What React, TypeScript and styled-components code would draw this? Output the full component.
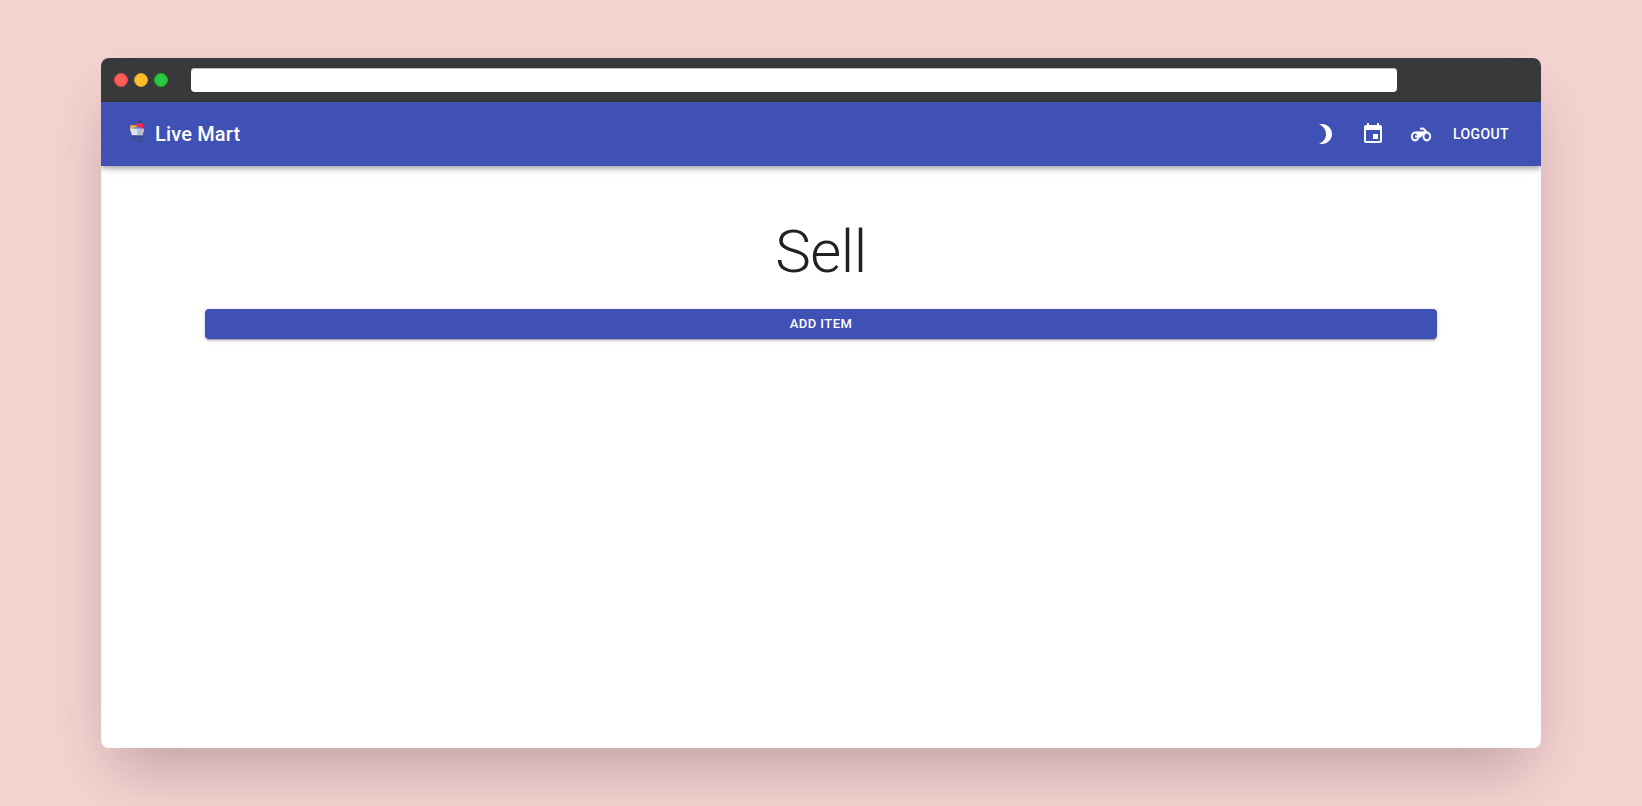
import React from "react";
import styled, { createGlobalStyle } from "styled-components";

const GlobalStyle = createGlobalStyle`
  * { box-sizing: border-box; }
  html, body { margin: 0; }
  body {
    background: #f5d3d1;
    font-family: Roboto, "Liberation Sans", sans-serif;
    color: rgba(0, 0, 0, 0.87);
  }
`;

const Page = styled.div`
  height: 806px;
  padding: 58px 101px;
  overflow: hidden;
`;

const Window = styled.div`
  height: 690px;
  overflow: hidden;
  border-radius: 8px;
  background: #fff;
  box-shadow: 0 30px 60px -12px rgba(0, 0, 0, 0.24);
`;

const TitleBar = styled.div`
  height: 44px;
  padding-left: 13px;
  display: flex;
  align-items: center;
  gap: 6px;
  background: #38393b;
`;

const Dot = styled.span<{ $fill: string; $edge: string }>`
  width: 14px;
  height: 14px;
  border-radius: 50%;
  background: ${(p) => p.$fill};
  border: 1px solid ${(p) => p.$edge};
`;

const Address = styled.div`
  width: 1206px;
  height: 24px;
  margin-left: 17px;
  border-radius: 4px;
  background: #fff;
  box-shadow: inset 0 1px 0 #b9b9ba;
`;

const AppBar = styled.header`
  height: 64px;
  padding: 0 24px;
  display: flex;
  align-items: center;
  justify-content: space-between;
  background: #3f51b5;
  color: #fff;
  box-shadow: 0 2px 4px -1px rgba(0, 0, 0, 0.2), 0 4px 5px 0 rgba(0, 0, 0, 0.14), 0 1px 10px 0 rgba(0, 0, 0, 0.12);
`;

const Brand = styled.div`
  display: flex;
  align-items: center;
  font-size: 20px;
  font-weight: 500;
  line-height: 32px;
  letter-spacing: 0.15px;
`;

const CartIcon = styled.svg`
  width: 24px;
  height: 24px;
  margin: 0 6px 6px 0;
`;

const Actions = styled.nav`
  display: flex;
  align-items: center;
`;

const IconButton = styled.button`
  width: 48px;
  height: 48px;
  padding: 12px;
  border: 0;
  background: none;
  color: inherit;
  svg { display: block; width: 24px; height: 24px; fill: currentColor; }
`;

const TextButton = styled.button`
  padding: 6px 8px;
  border: 0;
  background: none;
  color: inherit;
  font: 500 14px/24.5px Roboto, sans-serif;
  letter-spacing: 0.4px;
`;

const Main = styled.main`
  width: 1280px;
  margin: 0 auto;
  padding: 50px 24px 0;
`;

const Heading = styled.h1`
  margin: 0 0 21px;
  font-size: 60px;
  font-weight: 300;
  line-height: 72px;
  letter-spacing: -0.5px;
  text-align: center;
`;

const AddButton = styled.button`
  display: block;
  width: 100%;
  height: 30px;
  padding: 0;
  border: 0;
  border-radius: 4px;
  background: #3f51b5;
  color: #fff;
  font: 500 13px/22px Roboto, sans-serif;
  letter-spacing: 0.46px;
  box-shadow: 0 3px 1px -2px rgba(0, 0, 0, 0.2), 0 2px 2px 0 rgba(0, 0, 0, 0.14), 0 1px 5px 0 rgba(0, 0, 0, 0.12);
`;

const MOON = "M9 2c-1.05 0-2.05.16-3 .46 4.06 1.27 7 5.06 7 9.54 0 4.48-2.94 8.27-7 9.54.95.3 1.95.46 3 .46 5.52 0 10-4.48 10-10S14.52 2 9 2z";
const EVENT = "M17 12h-5v5h5v-5zM16 1v2H8V1H6v2H5c-1.11 0-1.99.9-1.99 2L3 19c0 1.1.89 2 2 2h14c1.1 0 2-.9 2-2V5c0-1.1-.9-2-2-2h-1V1h-2zm3 18H5V8h14v11z";
const BIKE = "M19.44 9.03L15.41 5H11v2h3.59l2 2H5c-2.8 0-5 2.2-5 5s2.2 5 5 5c2.46 0 4.45-1.69 4.9-4h1.65l2.77-2.77c-.21.54-.32 1.14-.32 1.77 0 2.8 2.2 5 5 5s5-2.2 5-5c0-2.65-1.97-4.77-4.56-4.97zM7.82 15C7.4 16.15 6.28 17 5 17c-1.63 0-3-1.37-3-3s1.37-3 3-3c1.28 0 2.4.85 2.82 2H5v2h2.82zM19 17c-1.66 0-3-1.34-3-3s1.34-3 3-3 3 1.34 3 3-1.34 3-3 3z";

function Action({ label, path, viewBox = "0 0 24 24", weight = 0 }: { label: string; path: string; viewBox?: string; weight?: number }) {
  return (
    <IconButton aria-label={label}>
      <svg viewBox={viewBox} preserveAspectRatio="none">
        <path d={path} stroke="currentColor" strokeWidth={weight} />
      </svg>
    </IconButton>
  );
}

export default function App() {
  return (
    <Page>
      <GlobalStyle />
      <Window>
        <TitleBar>
          <Dot $fill="#ff5f57" $edge="#e14640" />
          <Dot $fill="#ffbd2e" $edge="#dfa123" />
          <Dot $fill="#28c940" $edge="#1dad2b" />
          <Address />
        </TitleBar>
        <AppBar>
          <Brand>
            <CartIcon viewBox="0 0 24 24">
              <path d="M12.9 5V4a1.9 1.9 0 0 1 3.8 0v1" fill="none" stroke="#303c73" />
              <path d="M11.5 4.6H18V12h-6.5z" fill="#f62b54" />
              <path d="M5.3 6.2h6.4V12H5.3z" fill="#fdb62f" />
              <path d="M9 8.2h6.8V12H9z" fill="#4086f4" />
              <path d="M5 9.8h14.2l-1.7 6.7H7z" fill="#dce4f2" />
              <path d="M12.2 9.8h7l-1.7 6.7h-5.3z" fill="#b4bdd2" />
              <path d="M7 16.5h10.7v1H7z" fill="#35437f" />
              <circle cx="8.9" cy="20" r="1.9" fill="#303c73" />
              <circle cx="16" cy="20" r="1.9" fill="#303c73" />
              <circle cx="8.9" cy="20" r=".7" fill="#9fa9d0" />
              <circle cx="16" cy="20" r=".7" fill="#9fa9d0" />
            </CartIcon>
            Live Mart
          </Brand>
          <Actions>
            <Action label="Dark mode" path={MOON} />
            <Action label="Calendar" path={EVENT} />
            <Action label="Delivery" path={BIKE} viewBox="-2.4 -0.8 28.8 24.6" weight={0.25} />
            <TextButton>LOGOUT</TextButton>
          </Actions>
        </AppBar>
        <Main>
          <Heading>Sell</Heading>
          <AddButton>ADD ITEM</AddButton>
        </Main>
      </Window>
    </Page>
  );
}
